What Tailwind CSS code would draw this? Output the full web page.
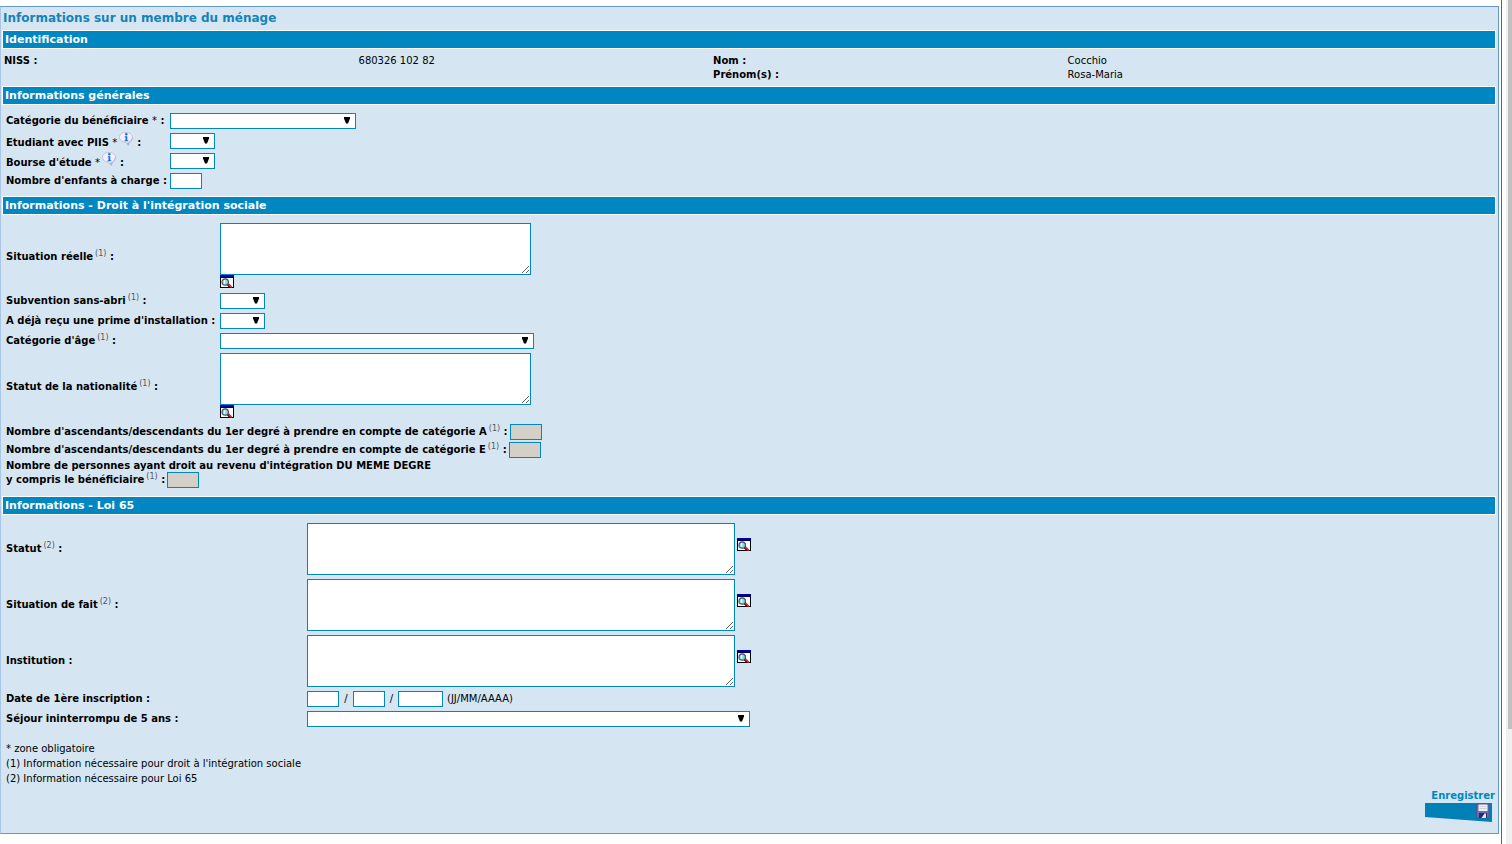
<!DOCTYPE html>
<html lang="fr">
<head>
<meta charset="utf-8">
<title>Informations sur un membre du ménage</title>
<script src="https://cdn.jsdelivr.net/npm/@tailwindcss/browser@4"></script>
</head>
<body class="bg-white text-[10px] leading-[14px] text-black font-[Verdana,'DejaVu_Sans',sans-serif]">
<svg class="hidden" aria-hidden="true">
  <symbol id="arrow" viewBox="0 0 6 7"><path d="M0 0h6v1.500L4 6.500H2L0 1.500z" fill="#000"/></symbol>
  <symbol id="lookup" viewBox="0 0 14 13">
    <path d="M0 0h14v13H0z" fill="#000"/><path d="M1 3h12v9H1z" fill="#fff"/><path d="M0 0h14v2.500H0z" fill="#0000a0"/>
    <path d="M7.500 9l3.500 3.500" stroke="#400" stroke-width="2.600"/><path d="M8.500 9.200l3.200 3.200" stroke="#e03838" stroke-width="1.500"/>
    <circle cx="5.200" cy="7" r="3.200" fill="#8fdce4" stroke="#46505c" stroke-width="1.200"/><path d="M4.500 5v3.800" stroke="#e8ffff" stroke-width="1.200"/>
  </symbol>
  <symbol id="info" viewBox="0 0 14 14">
    <path d="M7 .5c3.700 0 6.500 2 6.500 5 0 2.300-1.300 3.500-2.500 4.700-.8.800-1.200 2-1.300 3.300-1.600-.7-2.200-2.200-2.600-3.200C3.300 10 .5 8.200.5 5.300.5 2.500 3.300.5 7 .5z" fill="#f1f1ff" stroke="#b4b6d8" stroke-width=".8"/>
    <path d="M13.300 4.500c.3 2.600-1.200 4.400-2.400 5.600-.8.800-1.200 2-1.200 3.200-.9-.4-1.500-1.100-1.900-1.900 2.900-1.200 4.700-3.500 5.500-6.900z" fill="#a6a8ca"/>
    <circle cx="7.300" cy="2.300" r="1.200" fill="#1c6fd0"/><path d="M5.700 4.200h2.600v4h1v1H5.500v-1h1V5.200h-.8z" fill="#1c6fd0"/>
  </symbol>
  <symbol id="save" viewBox="0 0 14 15">
    <path d="M.5.500h12.500v13.500H2L.5 12.500z" fill="#6670b0" stroke="#4a5096" stroke-width=".8"/>
    <path d="M2.500.500h9v6.500h-9z" fill="#f2f2f4"/><path d="M3.500 2.600h7M3.500 4.600h7" stroke="#c9c9d0" stroke-width=".9"/>
    <path d="M3 9h8v5H3z" fill="#23297e"/><path d="M5.500 14l3-4.500H10V14z" fill="#e6e8f4"/>
  </symbol>
</svg>
<div class="flex min-h-screen">
  <div class="flex-1 border-r border-[#0086c0] pt-1.5 pr-0.5">
    <form class="border border-[#6499cf] border-l-[#a9c6e8] bg-[#d5e6f2] pl-px pr-0.5 pb-2.5">
      <h1 class="h-[23px] pt-1 pl-px text-[12px] leading-[14px] font-bold text-[#1583b8]">Informations sur un membre du ménage</h1>

      <h2 class="h-[19px] border border-white bg-[#0086c0] pl-0.5 text-[11px] leading-[18px] font-bold text-white">Identification</h2>
      <dl class="grid grid-cols-[355fr_355fr_355fr_429fr] pt-[5px] pb-1 pl-0.5">
        <dt class="font-bold">NISS :</dt><dd>680326 102 82</dd>
        <dt class="font-bold">Nom :</dt><dd>Cocchio</dd>
        <dt class="col-start-3 font-bold">Prénom(s) :</dt><dd>Rosa-Maria</dd>
      </dl>

      <h2 class="h-[19px] border border-white bg-[#0086c0] pl-0.5 text-[11px] leading-[18px] font-bold text-white">Informations générales</h2>
      <section class="grid auto-rows-[20px] grid-cols-[164px_1fr] items-center pt-1.5 pb-[5px] pl-1">
        <label for="cat" class="font-bold whitespace-nowrap">Catégorie du bénéficiaire <span class="font-normal">*</span> :</label>
        <div class="relative w-[186px]"><select id="cat" class="block h-4 w-full appearance-none border border-[#0086c0] bg-white"><option></option></select><svg class="pointer-events-none absolute top-1 right-1.5 h-[7px] w-1.5"><use href="#arrow"/></svg></div>
        <div class="flex items-end font-bold whitespace-nowrap"><label for="piis">Etudiant avec PIIS <span class="font-normal">*</span></label><button type="button" aria-label="Aide : étudiant avec PIIS" class="mb-1 ml-0.5"><svg class="block size-3.5"><use href="#info"/></svg></button><span class="pl-1">:</span></div>
        <div class="relative w-[45px]"><select id="piis" class="block h-4 w-full appearance-none border border-[#0086c0] bg-white"><option></option></select><svg class="pointer-events-none absolute top-1 right-1.5 h-[7px] w-1.5"><use href="#arrow"/></svg></div>
        <div class="flex items-end font-bold whitespace-nowrap"><label for="bourse">Bourse d'étude <span class="font-normal">*</span></label><button type="button" aria-label="Aide : bourse d'étude" class="mb-1 ml-0.5"><svg class="block size-3.5"><use href="#info"/></svg></button><span class="pl-1">:</span></div>
        <div class="relative w-[45px]"><select id="bourse" class="block h-4 w-full appearance-none border border-[#0086c0] bg-white"><option></option></select><svg class="pointer-events-none absolute top-1 right-1.5 h-[7px] w-1.5"><use href="#arrow"/></svg></div>
        <label for="enfants" class="font-bold whitespace-nowrap">Nombre d'enfants à charge :</label>
        <input id="enfants" type="text" class="h-4 w-8 border border-[#0086c0] bg-white">
      </section>

      <h2 class="h-[19px] border border-white bg-[#0086c0] pl-0.5 text-[11px] leading-[18px] font-bold text-white">Informations - Droit à l'intégration sociale</h2>
      <section class="pt-2 pb-2 pl-1">
        <div class="grid grid-cols-[214px_1fr] grid-rows-[68px_20px_20px_20px_72px] items-center">
          <label for="reelle" class="font-bold">Situation réelle<sup class="ml-0.5 text-[8px] font-normal text-[#555]">(1)</sup> :</label>
          <div class="self-start"><textarea id="reelle" class="block h-[52px] w-[311px] border border-[#0086c0] bg-white"></textarea><button type="button" aria-label="Rechercher une situation réelle" class="block"><svg class="block h-[13px] w-3.5"><use href="#lookup"/></svg></button></div>
          <label for="abri" class="font-bold whitespace-nowrap">Subvention sans-abri<sup class="ml-0.5 text-[8px] font-normal text-[#555]">(1)</sup> :</label>
          <div class="relative w-[45px]"><select id="abri" class="block h-4 w-full appearance-none border border-[#0086c0] bg-white"><option></option></select><svg class="pointer-events-none absolute top-1 right-1.5 h-[7px] w-1.5"><use href="#arrow"/></svg></div>
          <label for="prime" class="font-bold whitespace-nowrap">A déjà reçu une prime d'installation :</label>
          <div class="relative w-[45px]"><select id="prime" class="block h-4 w-full appearance-none border border-[#0086c0] bg-white"><option></option></select><svg class="pointer-events-none absolute top-1 right-1.5 h-[7px] w-1.5"><use href="#arrow"/></svg></div>
          <label for="age" class="font-bold whitespace-nowrap">Catégorie d'âge<sup class="ml-0.5 text-[8px] font-normal text-[#555]">(1)</sup> :</label>
          <div class="relative w-[314px]"><select id="age" class="block h-4 w-full appearance-none border border-[#0086c0] bg-white"><option></option></select><svg class="pointer-events-none absolute top-1 right-1.5 h-[7px] w-1.5"><use href="#arrow"/></svg></div>
          <label for="nat" class="font-bold whitespace-nowrap">Statut de la nationalité<sup class="ml-0.5 text-[8px] font-normal text-[#555]">(1)</sup> :</label>
          <div class="self-start pt-0.5"><textarea id="nat" class="block h-[52px] w-[311px] border border-[#0086c0] bg-white"></textarea><button type="button" aria-label="Rechercher un statut de nationalité" class="block"><svg class="block h-[13px] w-3.5"><use href="#lookup"/></svg></button></div>
        </div>
        <div class="flex h-[18px] items-center gap-0.5"><label for="cata" class="font-bold">Nombre d'ascendants/descendants du 1er degré à prendre en compte de catégorie A<sup class="ml-0.5 text-[8px] font-normal text-[#555]">(1)</sup> :</label><input id="cata" type="text" disabled class="h-4 w-8 border border-[#0086c0] bg-[#d4d0c8]"></div>
        <div class="flex h-[18px] items-center gap-0.5"><label for="cate" class="font-bold">Nombre d'ascendants/descendants du 1er degré à prendre en compte de catégorie E<sup class="ml-0.5 text-[8px] font-normal text-[#555]">(1)</sup> :</label><input id="cate" type="text" disabled class="h-4 w-8 border border-[#0086c0] bg-[#d4d0c8]"></div>
        <label for="degre" class="block h-[13px] font-bold">Nombre de personnes ayant droit au revenu d'intégration DU MEME DEGRE</label>
        <div class="flex h-4 items-center gap-0.5"><label for="degre" class="font-bold">y compris le bénéficiaire<sup class="ml-0.5 text-[8px] font-normal text-[#555]">(1)</sup> :</label><input id="degre" type="text" disabled class="h-4 w-8 border border-[#0086c0] bg-[#d4d0c8]"></div>
      </section>

      <h2 class="h-[19px] border border-white bg-[#0086c0] pl-0.5 text-[11px] leading-[18px] font-bold text-white">Informations - Loi 65</h2>
      <section class="grid grid-cols-[301px_1fr] grid-rows-[56px_56px_54px_20px_20px] pt-2 pl-1">
        <label for="statut" class="pt-[19px] font-bold">Statut<sup class="ml-0.5 text-[8px] font-normal text-[#555]">(2)</sup> :</label>
        <div class="flex gap-0.5"><textarea id="statut" class="block h-[52px] w-[428px] border border-[#0086c0] bg-white"></textarea><button type="button" aria-label="Rechercher un statut" class="self-start pt-[15px]"><svg class="block h-[13px] w-3.5"><use href="#lookup"/></svg></button></div>
        <label for="fait" class="pt-[19px] font-bold">Situation de fait<sup class="ml-0.5 text-[8px] font-normal text-[#555]">(2)</sup> :</label>
        <div class="flex gap-0.5"><textarea id="fait" class="block h-[52px] w-[428px] border border-[#0086c0] bg-white"></textarea><button type="button" aria-label="Rechercher une situation de fait" class="self-start pt-[15px]"><svg class="block h-[13px] w-3.5"><use href="#lookup"/></svg></button></div>
        <label for="inst" class="pt-[19px] font-bold">Institution :</label>
        <div class="flex gap-0.5"><textarea id="inst" class="block h-[52px] w-[428px] border border-[#0086c0] bg-white"></textarea><button type="button" aria-label="Rechercher une institution" class="self-start pt-[15px]"><svg class="block h-[13px] w-3.5"><use href="#lookup"/></svg></button></div>
        <label for="jour" class="self-center font-bold">Date de 1ère inscription :</label>
        <div class="flex items-center"><input id="jour" aria-label="Jour" type="text" class="h-4 w-8 border border-[#0086c0] bg-white"><span class="w-3.5 text-center">/</span><input aria-label="Mois" type="text" class="h-4 w-8 border border-[#0086c0] bg-white"><span class="w-[13px] text-center">/</span><input aria-label="Année" type="text" class="h-4 w-[45px] border border-[#0086c0] bg-white"><span class="pl-1">(JJ/MM/AAAA)</span></div>
        <label for="sejour" class="self-center font-bold">Séjour ininterrompu de 5 ans :</label>
        <div class="relative w-[443px] self-center"><select id="sejour" class="block h-4 w-full appearance-none border border-[#0086c0] bg-white"><option></option></select><svg class="pointer-events-none absolute top-1 right-1.5 h-[7px] w-1.5"><use href="#arrow"/></svg></div>
      </section>

      <div class="pt-3 pl-1 leading-[15px]">
        <p>* zone obligatoire</p>
        <p>(1) Information nécessaire pour droit à l'intégration sociale</p>
        <p>(2) Information nécessaire pour Loi 65</p>
      </div>
      <div class="flex justify-end pt-[3px]">
        <button type="submit" class="flex flex-col items-end font-bold text-[#0086c0]"><span class="pr-px">Enregistrer</span>
          <svg class="mr-1 block h-5 w-[67px]" viewBox="0 0 67 20" aria-hidden="true"><path d="M0 0h67v19L0 14z" fill="#0080b4"/><use href="#save" x="51" y="1" width="14" height="15"/></svg>
        </button>
      </div>
    </form>
  </div>
  <div class="ml-1 flex w-1.5 flex-col bg-[#f0f0f0] pl-0.5"><div class="h-[729px] bg-[#c1c1c1]"></div></div>
</div>
</body>
</html>
